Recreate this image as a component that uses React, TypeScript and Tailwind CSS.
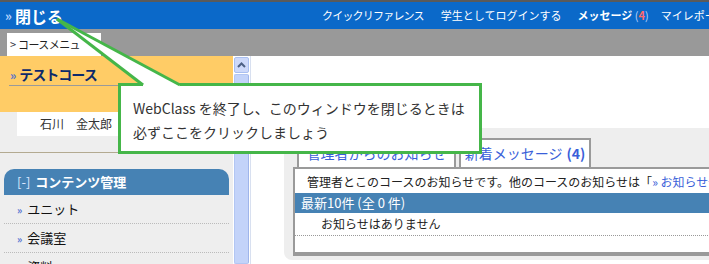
export default function App() {
  return (
    <div className="relative w-[709px] h-[264px] overflow-hidden bg-white font-['Noto_Sans_CJK_JP',sans-serif]">
      {/* top bar */}
      <div className="h-[2px] bg-[#5a5a5a]" />
      <div className="h-[27px] bg-[#0b69c9] flex items-center whitespace-nowrap text-white overflow-hidden">
        <div className="w-[322px] shrink-0 flex items-center pl-[5px]">
          <span className="text-[13px] text-[#bcd6ff] font-bold mr-[3px] leading-none">»</span>
          <span className="text-[16px] font-bold leading-none">閉じる</span>
        </div>
        <span className="text-[11px] tracking-[-0.8px] shrink-0">クイックリファレンス</span>
        <span className="ml-[17px] text-[11px] shrink-0">学生としてログインする</span>
        <span className="ml-[16px] text-[11px] font-bold shrink-0">
          メッセージ <span className="text-[#b8d4ff] font-normal">(</span>
          <span className="text-[#ff6a6a]">4</span>
          <span className="text-[#b8d4ff] font-normal">)</span>
        </span>
        <span className="ml-[12px] text-[11px] shrink-0">マイレポート</span>
      </div>

      {/* gray tab bar */}
      <div className="h-[27px] bg-[#999999] pt-[4px] pl-[7px]">
        <div className="w-[94px] h-[23px] bg-white flex items-center pl-[3px] text-[11px] text-[#222] whitespace-nowrap">
          <span className="text-[#334] mr-[2px]">&gt;</span>
          <span className="tracking-[-0.6px]">コースメニュ</span>
        </div>
      </div>

      {/* body */}
      <div className="flex h-[208px]">
        {/* sidebar */}
        <div className="w-[233px] shrink-0 bg-[#eeeeee]">
          <div className="h-[56px] bg-[#ffcc66] pl-[9px] pt-[8px]">
            <div className="w-[216px] border-b border-[#9a9a9a] h-[22px] flex items-center">
              <span className="text-[#4f6fd0] text-[12px] font-bold mr-[3px] ml-[1px]">»</span>
              <span className="text-[14px] font-bold text-[#0d2a6b] tracking-[-1px]">テストコース</span>
            </div>
          </div>
          <div className="h-[24px] pl-[17px]">
            <div className="w-[212px] h-full bg-white flex items-center pl-[23px] text-[12px] text-[#333]">
              石川　金太郎
            </div>
          </div>
          <div className="h-[17px] border-b border-[#b3aa91]" />
          <div className="mt-[16px] mx-[4px] h-[26px] rounded-t-[10px] bg-[#4682b4] flex items-center pl-[13px] text-white text-[13px] font-bold whitespace-nowrap">
            <span className="text-[#dbe8ff] font-normal mr-[5px]">[-]</span>
            <span>コンテンツ管理</span>
          </div>
          {["ユニット", "会議室", "資料"].map((t) => (
            <div
              key={t}
              className="mx-[4px] h-[29px] border-b border-dotted border-[#bbbbbb] flex items-center pl-[13px] text-[13px] text-[#111]"
            >
              <span className="text-[#4f6fd0] text-[10px] font-bold mr-[5px]">»</span>
              <span>{t}</span>
            </div>
          ))}
        </div>

        {/* scrollbar */}
        <div className="w-[17px] shrink-0 bg-white pl-[1px] flex flex-col">
          <div className="w-[15px] mt-[1px] h-[16px] rounded-[2px] border border-[#a9bff0] bg-[#cdd9fa] flex items-center justify-center">
            <svg width="9" height="6" viewBox="0 0 9 6">
              <path d="M1 5 L4.5 1.5 L8 5" stroke="#4d6185" strokeWidth="2" fill="none" />
            </svg>
          </div>
          <div className="w-[15px] flex-1 mt-[1px] rounded-[2px] border border-[#b2c6f3] bg-[#c3d3f9] border-r-[#9fb5ea]" />
        </div>

        {/* main */}
        <div className="flex-1 min-w-0 bg-white pt-[72px] pl-[33px] border-l border-[#d8e0f0] overflow-hidden">
          <div className="w-[440px] h-[132px] bg-[#eeeeee] rounded-[8px] pt-[10px]">
            <div className="flex gap-[3px] pl-[13px] h-[29px]">
              <div className="w-[159px] h-full border-2 border-b-0 border-[#9a9a9a] bg-white flex items-center justify-center text-[14px] text-[#3a5fd9] whitespace-nowrap">
                管理者からのお知らせ
              </div>
              <div className="w-[132px] h-full border-2 border-b-0 border-[#9a9a9a] bg-white flex items-center justify-center text-[14px] text-[#3a5fd9] whitespace-nowrap">
                新着メッセージ <span className="font-bold ml-[4px]">(4)</span>
              </div>
            </div>
            <div className="ml-[9px] h-[89px] border-l-2 border-t-2 border-b-[4px] border-[#9a9a9a] bg-white">
              <div className="h-[24px] pt-[2px] pl-[12px] flex items-center text-[12px] text-[#222] whitespace-nowrap">
                管理者とこのコースのお知らせです。他のコースのお知らせは「
                <span className="text-[#3a5fd9]">» お知らせ一覧</span>」
              </div>
              <div className="h-[20px] bg-[#4682b4] flex items-center pl-[6px] text-[13px] text-white whitespace-nowrap">
                最新10件 (全 0 件)
              </div>
              <div className="h-[23px] border-b border-dotted border-[#999] flex items-center pl-[26px] text-[12px] text-[#222]">
                お知らせはありません
              </div>
            </div>
          </div>
        </div>
      </div>

      {/* callout */}
      <div className="absolute left-[118px] top-[83px] w-[364px] h-[71px] border-[3px] border-[#45b649] bg-white pl-[12px] pt-[10px] text-[14px] leading-[24px] text-[#333] whitespace-nowrap">
        <div>WebClass を終了し、このウィンドウを閉じるときは</div>
        <div>必ずここをクリックしましょう</div>
      </div>
      <svg className="absolute left-0 top-0 pointer-events-none" width="709" height="264" viewBox="0 0 709 264">
        <polygon points="57,19 143,84 143,87 180,87 180,84" fill="white" />
        <line x1="57" y1="19" x2="143" y2="85" stroke="#45b649" strokeWidth="3" />
        <line x1="57" y1="19" x2="180" y2="85" stroke="#45b649" strokeWidth="3" />
      </svg>
    </div>
  );
}
